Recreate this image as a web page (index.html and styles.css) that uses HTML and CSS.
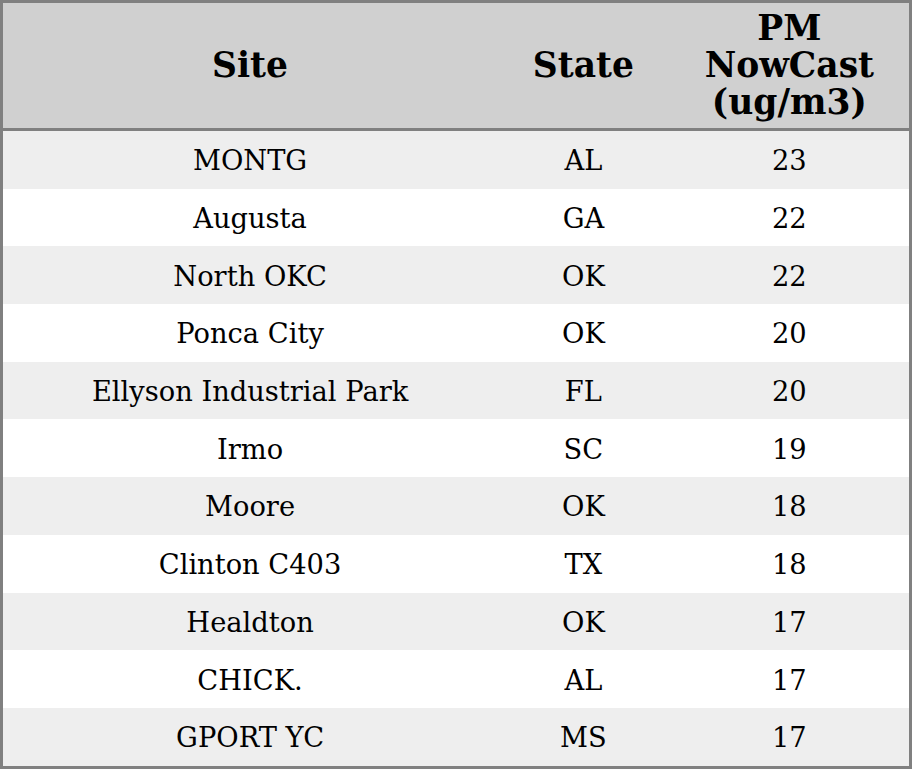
FILE: index.html
```html
<!DOCTYPE html>
<html>
<head>
<meta charset="utf-8">
<link rel="stylesheet" href="styles.css">
</head>
<body>
<table class="aq">
  <colgroup>
    <col class="c-site">
    <col class="c-state">
    <col class="c-pm">
  </colgroup>
  <thead>
    <tr><th>Site</th><th>State</th><th>PM<br>NowCast<br>(ug/m3)</th></tr>
  </thead>
  <tbody>
    <tr><td>MONTG</td><td>AL</td><td>23</td></tr>
    <tr><td>Augusta</td><td>GA</td><td>22</td></tr>
    <tr><td>North OKC</td><td>OK</td><td>22</td></tr>
    <tr><td>Ponca City</td><td>OK</td><td>20</td></tr>
    <tr><td>Ellyson Industrial Park</td><td>FL</td><td>20</td></tr>
    <tr><td>Irmo</td><td>SC</td><td>19</td></tr>
    <tr><td>Moore</td><td>OK</td><td>18</td></tr>
    <tr><td>Clinton C403</td><td>TX</td><td>18</td></tr>
    <tr><td>Healdton</td><td>OK</td><td>17</td></tr>
    <tr><td>CHICK.</td><td>AL</td><td>17</td></tr>
    <tr><td>GPORT YC</td><td>MS</td><td>17</td></tr>
  </tbody>
</table>
</body>
</html>
```
FILE: styles.css
```css
html, body {
  margin: 0;
  padding: 0;
  background: #ffffff;
}
.aq {
  width: 912px;
  border-collapse: collapse;
  border: 3px solid #808080;
  font-family: "DejaVu Serif", serif;
  color: #000;
  table-layout: fixed;
}
.c-site { width: 494px; }
.c-state { width: 172px; }
.c-pm { width: 240px; }
.aq th {
  background: #d0d0d0;
  font-size: 34.5px;
  font-weight: bold;
  line-height: 37px;
  height: 125px;
  padding: 0;
  text-align: center;
  vertical-align: middle;
  border-bottom: 3px solid #808080;
}
.aq td {
  font-size: 27.3px;
  height: 55.7px;
  padding: 2px 0 0 0;
  text-align: center;
  vertical-align: middle;
}
.aq tbody tr:nth-child(odd) { background: #eeeeee; }
.aq tbody tr:nth-child(even) { background: #ffffff; }
```
